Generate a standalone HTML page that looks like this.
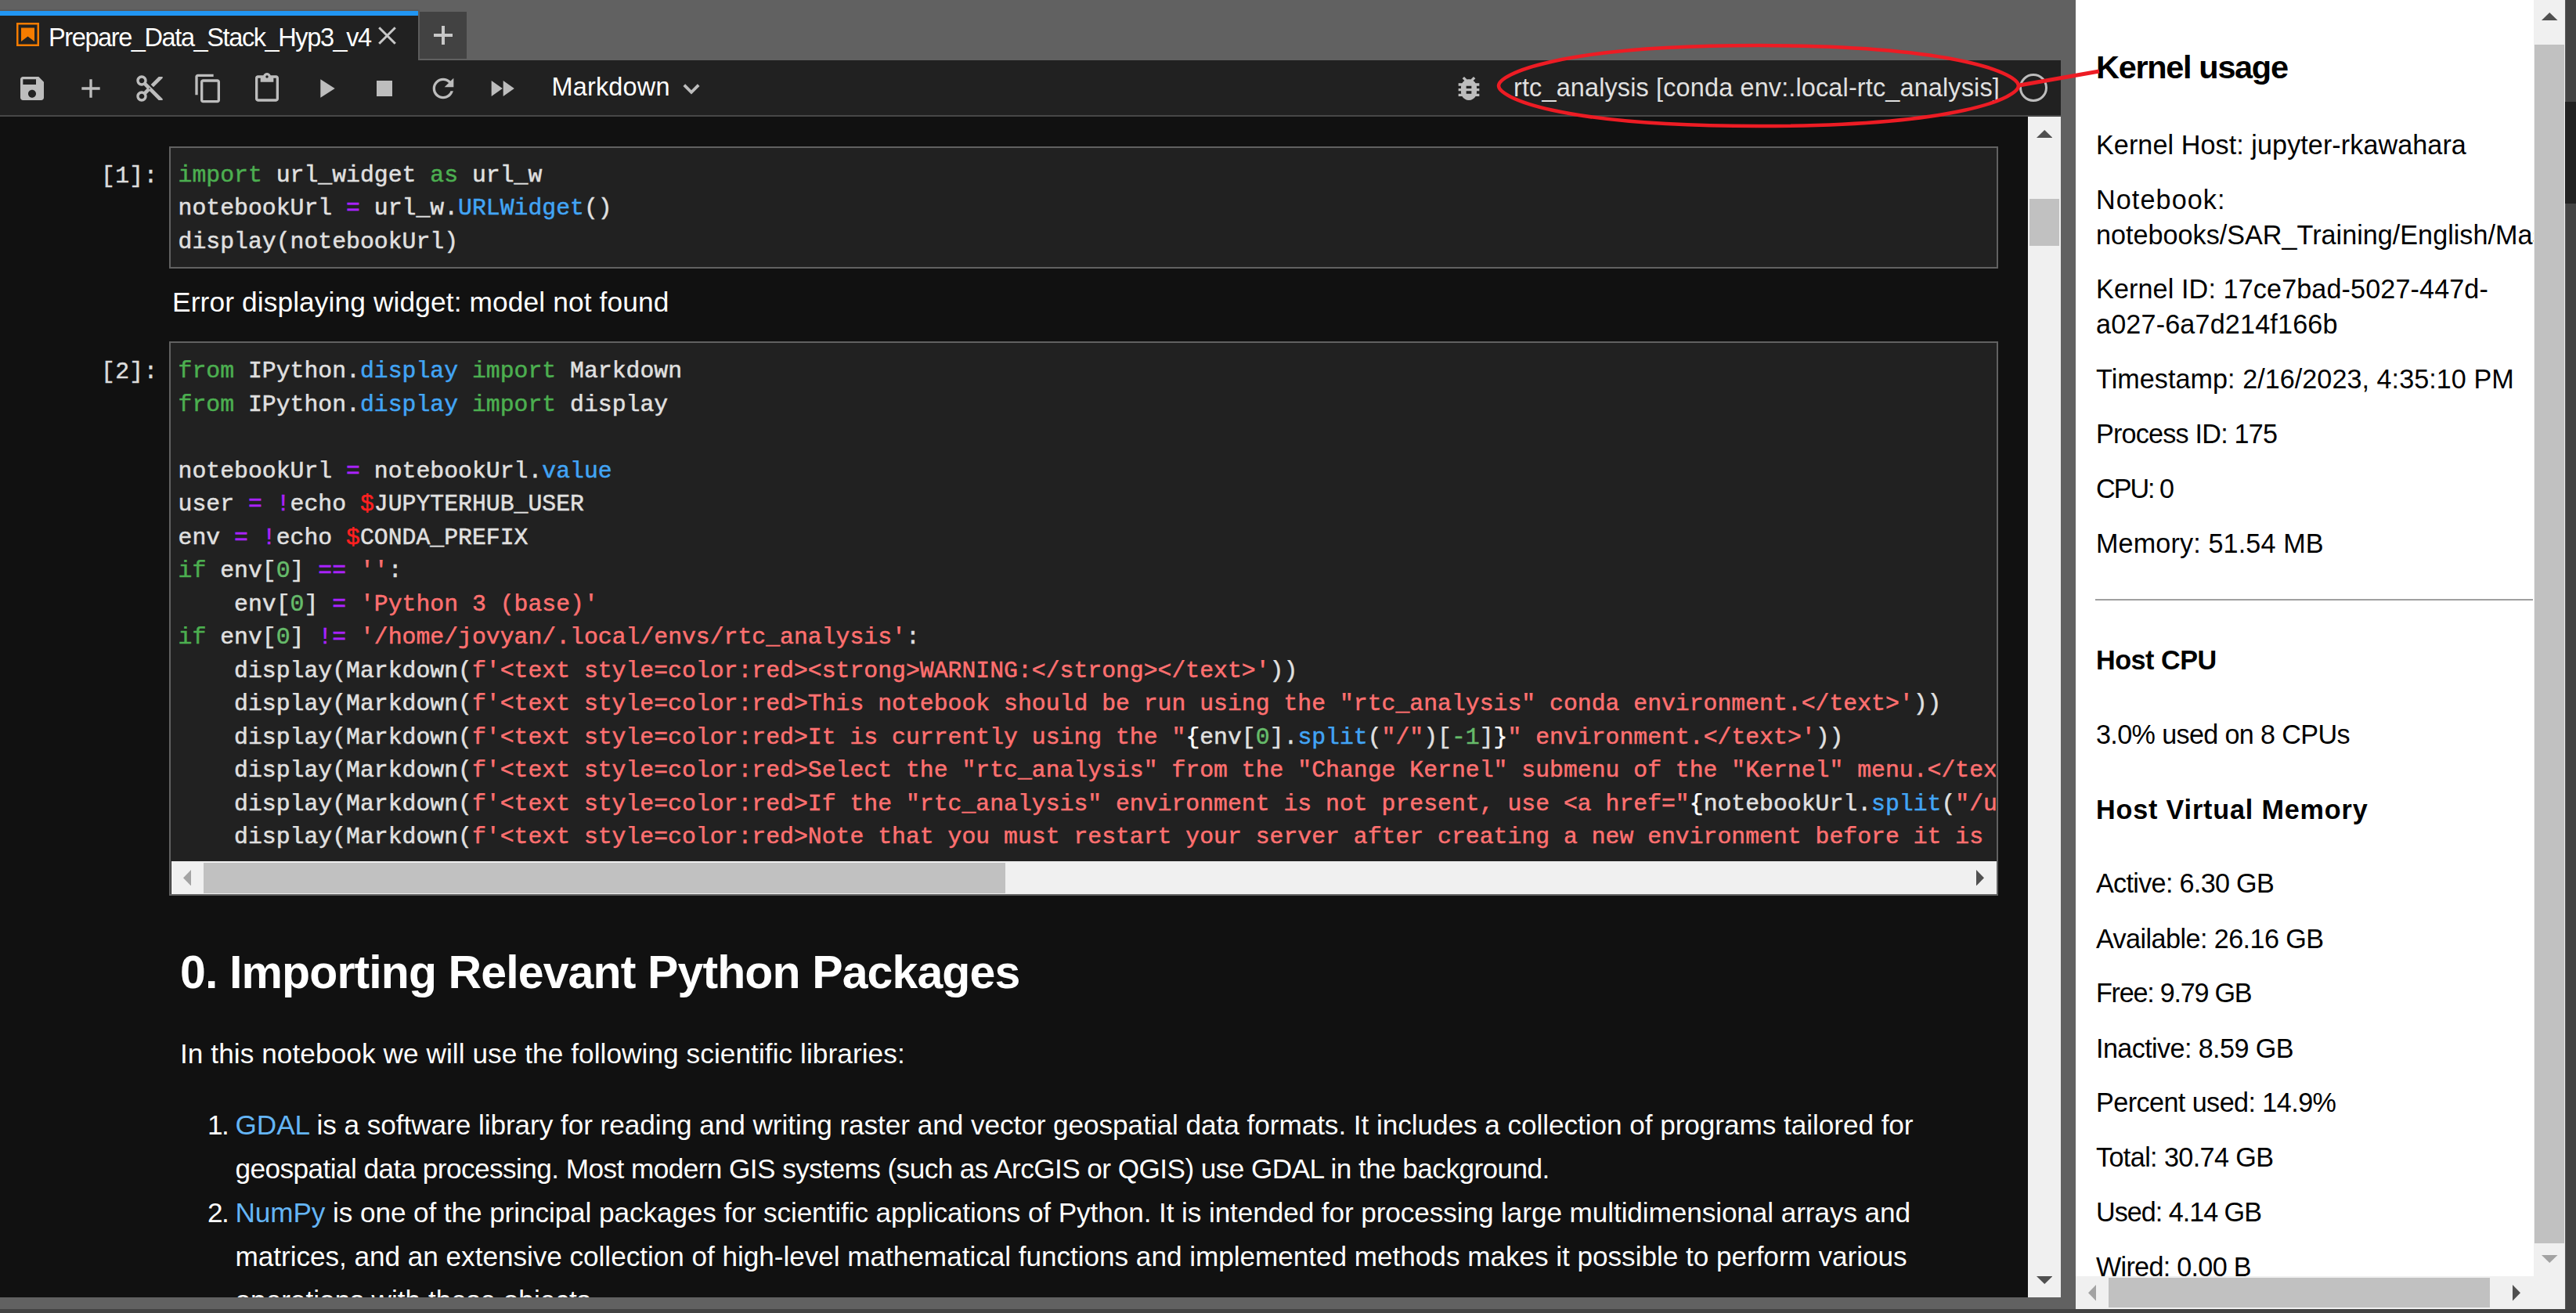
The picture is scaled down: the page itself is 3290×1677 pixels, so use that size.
<!DOCTYPE html><html><head><meta charset="utf-8"><style>html,body{margin:0;padding:0}body{width:3290px;height:1677px;overflow:hidden;position:relative;background:#616161}</style></head><body>
<div style="position:absolute;left:0px;top:12px;width:535px;height:2px;background:#5a5a5a;"></div>
<div style="position:absolute;left:0px;top:14px;width:534px;height:6px;background:#2196f3;"></div>
<div style="position:absolute;left:0px;top:20px;width:534px;height:57px;background:#212121;"></div>
<div style="position:absolute;left:534px;top:12px;width:2px;height:65px;background:#5c5c5c;"></div>
<div style="position:absolute;left:536px;top:15px;width:60px;height:60px;background:#424242;"></div>
<svg style="position:absolute;left:21px;top:29px" width="29" height="30" viewBox="0 0 29 30"><rect x="1.25" y="1.25" width="26.5" height="27.5" fill="none" stroke="#f57c00" stroke-width="2.5"/><path fill="#f57c00" d="M6 6.5h17v17.5l-8.5-6.5-8.5 6.5z"/></svg>
<div id="t0" style="position:absolute;left:62px;top:32.49px;font-family:'Liberation Sans', sans-serif;font-size:32.5px;line-height:32.5px;color:#ffffff;font-weight:normal;white-space:pre;letter-spacing:-1.394px;">Prepare_Data_Stack_Hyp3_v4</div>
<svg style="position:absolute;left:482px;top:33px" width="25" height="25" viewBox="0 0 25 25"><path d="M2.2 2.2L22.8 22.8M22.8 2.2L2.2 22.8" stroke="#c8c8c8" stroke-width="3"/></svg>
<div style="position:absolute;left:554px;top:43px;width:24px;height:4px;background:#c8c8c8;"></div>
<div style="position:absolute;left:564px;top:33px;width:4px;height:24px;background:#c8c8c8;"></div>
<div style="position:absolute;left:0px;top:77px;width:2632px;height:70px;background:#212121;"></div>
<div style="position:absolute;left:0px;top:147px;width:2632px;height:2px;background:#474747;"></div>
<div style="position:absolute;left:0px;top:149px;width:2590px;height:1px;background:#080808;"></div>
<svg style="position:absolute;left:20.8px;top:92.7px" width="40" height="40" viewBox="0 0 24 24"><path fill="#bdbdbd" d="M17 3H5c-1.11 0-2 .9-2 2v14c0 1.1.89 2 2 2h14c1.1 0 2-.9 2-2V7l-4-4zm-5 16c-1.66 0-3-1.34-3-3s1.34-3 3-3 3 1.34 3 3-1.34 3-3 3zm3-10H5V5h10v4z"/></svg>
<svg style="position:absolute;left:95.5px;top:92.7px" width="40" height="40" viewBox="0 0 24 24"><path fill="#bdbdbd" d="M19 13h-6v6h-2v-6H5v-2h6V5h2v6h6v2z"/></svg>
<svg style="position:absolute;left:170.7px;top:92.7px" width="40" height="40" viewBox="0 0 24 24"><path fill="#bdbdbd" d="M9.64 7.64c.23-.5.36-1.05.36-1.64 0-2.21-1.79-4-4-4S2 3.79 2 6s1.79 4 4 4c.59 0 1.14-.13 1.64-.36L10 12l-2.36 2.36C7.14 14.13 6.59 14 6 14c-2.21 0-4 1.79-4 4s1.79 4 4 4 4-1.79 4-4c0-.59-.13-1.14-.36-1.64L12 14l7 7h3v-1L9.64 7.64zM6 8c-1.1 0-2-.89-2-2s.9-2 2-2 2 .89 2 2-.9 2-2 2zm0 12c-1.1 0-2-.89-2-2s.9-2 2-2 2 .89 2 2-.9 2-2 2zm6-7.5c-.28 0-.5-.22-.5-.5s.22-.5.5-.5.5.22.5.5-.22.5-.5.5zM19 3l-6 6 2 2 7-7V3z"/></svg>
<svg style="position:absolute;left:246.2px;top:93.3px" width="40" height="40" viewBox="0 0 24 24"><path fill="#bdbdbd" d="M16 1H4c-1.1 0-2 .9-2 2v14h2V3h12V1zm3 4H8c-1.1 0-2 .9-2 2v14c0 1.1.9 2 2 2h11c1.1 0 2-.9 2-2V7c0-1.1-.9-2-2-2zm0 16H8V7h11v14z"/></svg>
<svg style="position:absolute;left:320.8px;top:93.1px" width="40" height="40" viewBox="0 0 24 24"><path fill="#bdbdbd" d="M19 2h-4.18C14.4.84 13.3 0 12 0c-1.3 0-2.4.84-2.82 2H5c-1.1 0-2 .9-2 2v16c0 1.1.9 2 2 2h14c1.1 0 2-.9 2-2V4c0-1.1-.9-2-2-2zm-7 0c.55 0 1 .45 1 1s-.45 1-1 1-1-.45-1-1 .45-1 1-1zm7 18H5V4h2v3h10V4h2v16z"/></svg>
<svg style="position:absolute;left:395.6px;top:92.7px" width="40" height="40" viewBox="0 0 24 24"><path fill="#bdbdbd" d="M8 5v14l11-7z"/></svg>
<svg style="position:absolute;left:470.8px;top:92.7px" width="40" height="40" viewBox="0 0 24 24"><path fill="#bdbdbd" d="M6 6h12v12H6z"/></svg>
<svg style="position:absolute;left:545.8px;top:92.7px" width="40" height="40" viewBox="0 0 24 24"><path fill="#bdbdbd" d="M17.65 6.35C16.2 4.9 14.21 4 12 4c-4.42 0-7.99 3.58-7.99 8s3.57 8 7.99 8c3.73 0 6.84-2.55 7.73-6h-2.08c-.82 2.33-3.04 4-5.65 4-3.31 0-6-2.69-6-6s2.69-6 6-6c1.66 0 3.14.69 4.22 1.78L13 11h7V4l-2.35 2.35z"/></svg>
<svg style="position:absolute;left:620.8px;top:93.2px" width="40" height="40" viewBox="0 0 24 24"><path fill="#bdbdbd" d="M4 18l8.5-6L4 6v12zm9-12v12l8.5-6L13 6z"/></svg>
<div id="t1" style="position:absolute;left:704.5px;top:95.49px;font-family:'Liberation Sans', sans-serif;font-size:32.5px;line-height:32.5px;color:#ffffff;font-weight:normal;white-space:pre;letter-spacing:0.15px;">Markdown</div>
<svg style="position:absolute;left:872px;top:106px" width="22" height="16" viewBox="0 0 22 16"><path d="M1.8 2.6L11 11.8L20.2 2.6" fill="none" stroke="#bdbdbd" stroke-width="3.8"/></svg>
<svg style="position:absolute;left:1855.9px;top:92.9px" width="40" height="40" viewBox="0 0 24 24"><path fill="#bdbdbd" d="M20 8h-2.81c-.45-.78-1.07-1.45-1.82-1.96L17 4.41 15.59 3l-2.17 2.17C12.96 5.06 12.49 5 12 5s-.96.06-1.41.17L8.41 3 7 4.41l1.62 1.63C7.88 6.55 7.26 7.22 6.81 8H4v2h2.09c-.05.33-.09.66-.09 1v1H4v2h2v1c0 .34.04.67.09 1H4v2h2.81c1.04 1.79 2.97 3 5.19 3s4.15-1.21 5.19-3H20v-2h-2.09c.05-.33.09-.66.09-1v-1h2v-2h-2v-1c0-.34-.04-.67-.09-1H20V8zm-6 8h-4v-2h4v2zm0-4h-4v-2h4v2z"/></svg>
<div style="position:absolute;left:1933px;top:96.27px;font-family:'Liberation Sans', sans-serif;font-size:32.4px;line-height:32.4px;color:#e0e0e0;font-weight:normal;white-space:pre;letter-spacing:0.16px;">rtc_analysis [conda env:.local-rtc_analysis]</div>
<svg style="position:absolute;left:2578px;top:93px" width="38" height="38" viewBox="0 0 38 38"><circle cx="19" cy="19" r="16.5" fill="none" stroke="#bdbdbd" stroke-width="3"/></svg>
<div style="position:absolute;left:0px;top:149px;width:2590px;height:1508px;background:#111111;"></div>
<div style="position:absolute;left:2590px;top:149px;width:42px;height:1508px;background:#f0f0f0;"></div>
<div style="position:absolute;left:2592px;top:254px;width:38px;height:60px;background:#c1c1c1;"></div>
<svg style="position:absolute;left:2600.5px;top:165.8px" width="20.5" height="10" viewBox="0 0 20.5 10"><path d="M0 10L10.25 0L20.5 10z" fill="#505050"/></svg>
<svg style="position:absolute;left:2600.5px;top:1630px" width="20.5" height="10" viewBox="0 0 20.5 10"><path d="M0 0L10.25 10L20.5 0z" fill="#505050"/></svg>
<div style="position:absolute;left:0px;top:1657px;width:2651px;height:15px;background:#616161;"></div>
<div style="position:absolute;left:0px;top:1672px;width:3290px;height:5px;background:#424242;"></div>
<div style="position:absolute;left:2632px;top:0px;width:19px;height:1672px;background:#616161;"></div>
<div style="position:absolute;left:216px;top:187px;width:2336px;height:156px;box-sizing:border-box;background:#212121;border:2px solid #616161"></div>
<div style="position:absolute;left:129px;top:210.77px;font-family:'Liberation Mono', monospace;font-size:29.79px;line-height:29.79px;white-space:pre;letter-spacing:0.3px;-webkit-text-stroke:0.5px;"><span style="color:#dcdcdc">[1]:</span></div>
<div style="position:absolute;left:227.6px;top:209.97px;font-family:'Liberation Mono', monospace;font-size:29.79px;line-height:29.79px;white-space:pre;letter-spacing:0.0px;-webkit-text-stroke:0.5px;"><span style="color:#4caf50">import</span><span style="color:#e0e0e0"> url_widget </span><span style="color:#4caf50">as</span><span style="color:#e0e0e0"> url_w</span></div>
<div style="position:absolute;left:227.6px;top:252.47px;font-family:'Liberation Mono', monospace;font-size:29.79px;line-height:29.79px;white-space:pre;letter-spacing:0.0px;-webkit-text-stroke:0.5px;"><span style="color:#e0e0e0">notebookUrl </span><span style="color:#aa22ff">=</span><span style="color:#e0e0e0"> url_w.</span><span style="color:#42a5f5">URLWidget</span><span style="color:#e0e0e0">()</span></div>
<div style="position:absolute;left:227.6px;top:294.97px;font-family:'Liberation Mono', monospace;font-size:29.79px;line-height:29.79px;white-space:pre;letter-spacing:0.0px;-webkit-text-stroke:0.5px;"><span style="color:#e0e0e0">display(notebookUrl)</span></div>
<div id="t2" style="position:absolute;left:220px;top:367.62px;font-family:'Liberation Sans', sans-serif;font-size:35.3px;line-height:35.3px;color:#ffffff;font-weight:normal;white-space:pre;letter-spacing:0.115px;">Error displaying widget: model not found</div>
<div style="position:absolute;left:216px;top:436px;width:2336px;height:708px;box-sizing:border-box;background:#212121;border:2px solid #616161"></div>
<div style="position:absolute;left:129px;top:461.17px;font-family:'Liberation Mono', monospace;font-size:29.79px;line-height:29.79px;white-space:pre;letter-spacing:0.3px;-webkit-text-stroke:0.5px;"><span style="color:#dcdcdc">[2]:</span></div>
<div style="position:absolute;left:227.6px;top:460.37px;font-family:'Liberation Mono', monospace;font-size:29.79px;line-height:29.79px;white-space:pre;letter-spacing:0.0px;-webkit-text-stroke:0.5px;width:2321.4px;overflow:hidden;"><span style="color:#4caf50">from</span><span style="color:#e0e0e0"> IPython.</span><span style="color:#42a5f5">display</span><span style="color:#e0e0e0"> </span><span style="color:#4caf50">import</span><span style="color:#e0e0e0"> Markdown</span></div>
<div style="position:absolute;left:227.6px;top:502.87px;font-family:'Liberation Mono', monospace;font-size:29.79px;line-height:29.79px;white-space:pre;letter-spacing:0.0px;-webkit-text-stroke:0.5px;width:2321.4px;overflow:hidden;"><span style="color:#4caf50">from</span><span style="color:#e0e0e0"> IPython.</span><span style="color:#42a5f5">display</span><span style="color:#e0e0e0"> </span><span style="color:#4caf50">import</span><span style="color:#e0e0e0"> display</span></div>
<div style="position:absolute;left:227.6px;top:587.87px;font-family:'Liberation Mono', monospace;font-size:29.79px;line-height:29.79px;white-space:pre;letter-spacing:0.0px;-webkit-text-stroke:0.5px;width:2321.4px;overflow:hidden;"><span style="color:#e0e0e0">notebookUrl </span><span style="color:#aa22ff">=</span><span style="color:#e0e0e0"> notebookUrl.</span><span style="color:#42a5f5">value</span></div>
<div style="position:absolute;left:227.6px;top:630.37px;font-family:'Liberation Mono', monospace;font-size:29.79px;line-height:29.79px;white-space:pre;letter-spacing:0.0px;-webkit-text-stroke:0.5px;width:2321.4px;overflow:hidden;"><span style="color:#e0e0e0">user </span><span style="color:#aa22ff">=</span><span style="color:#e0e0e0"> </span><span style="color:#aa22ff">!</span><span style="color:#e0e0e0">echo </span><span style="color:#ff2020">$</span><span style="color:#e0e0e0">JUPYTERHUB_USER</span></div>
<div style="position:absolute;left:227.6px;top:672.87px;font-family:'Liberation Mono', monospace;font-size:29.79px;line-height:29.79px;white-space:pre;letter-spacing:0.0px;-webkit-text-stroke:0.5px;width:2321.4px;overflow:hidden;"><span style="color:#e0e0e0">env </span><span style="color:#aa22ff">=</span><span style="color:#e0e0e0"> </span><span style="color:#aa22ff">!</span><span style="color:#e0e0e0">echo </span><span style="color:#ff2020">$</span><span style="color:#e0e0e0">CONDA_PREFIX</span></div>
<div style="position:absolute;left:227.6px;top:715.37px;font-family:'Liberation Mono', monospace;font-size:29.79px;line-height:29.79px;white-space:pre;letter-spacing:0.0px;-webkit-text-stroke:0.5px;width:2321.4px;overflow:hidden;"><span style="color:#4caf50">if</span><span style="color:#e0e0e0"> env[</span><span style="color:#66bb6a">0</span><span style="color:#e0e0e0">] </span><span style="color:#aa22ff">==</span><span style="color:#e0e0e0"> </span><span style="color:#ff7070">&#x27;&#x27;</span><span style="color:#e0e0e0">:</span></div>
<div style="position:absolute;left:227.6px;top:757.87px;font-family:'Liberation Mono', monospace;font-size:29.79px;line-height:29.79px;white-space:pre;letter-spacing:0.0px;-webkit-text-stroke:0.5px;width:2321.4px;overflow:hidden;"><span style="color:#e0e0e0">    env[</span><span style="color:#66bb6a">0</span><span style="color:#e0e0e0">] </span><span style="color:#aa22ff">=</span><span style="color:#e0e0e0"> </span><span style="color:#ff7070">&#x27;Python 3 (base)&#x27;</span></div>
<div style="position:absolute;left:227.6px;top:800.37px;font-family:'Liberation Mono', monospace;font-size:29.79px;line-height:29.79px;white-space:pre;letter-spacing:0.0px;-webkit-text-stroke:0.5px;width:2321.4px;overflow:hidden;"><span style="color:#4caf50">if</span><span style="color:#e0e0e0"> env[</span><span style="color:#66bb6a">0</span><span style="color:#e0e0e0">] </span><span style="color:#aa22ff">!=</span><span style="color:#e0e0e0"> </span><span style="color:#ff7070">&#x27;/home/jovyan/.local/envs/rtc_analysis&#x27;</span><span style="color:#e0e0e0">:</span></div>
<div style="position:absolute;left:227.6px;top:842.87px;font-family:'Liberation Mono', monospace;font-size:29.79px;line-height:29.79px;white-space:pre;letter-spacing:0.0px;-webkit-text-stroke:0.5px;width:2321.4px;overflow:hidden;"><span style="color:#e0e0e0">    display(Markdown(</span><span style="color:#ff7070">f&#x27;&lt;text style=color:red&gt;&lt;strong&gt;WARNING:&lt;/strong&gt;&lt;/text&gt;&#x27;</span><span style="color:#e0e0e0">))</span></div>
<div style="position:absolute;left:227.6px;top:885.37px;font-family:'Liberation Mono', monospace;font-size:29.79px;line-height:29.79px;white-space:pre;letter-spacing:0.0px;-webkit-text-stroke:0.5px;width:2321.4px;overflow:hidden;"><span style="color:#e0e0e0">    display(Markdown(</span><span style="color:#ff7070">f&#x27;&lt;text style=color:red&gt;This notebook should be run using the &quot;rtc_analysis&quot; conda environment.&lt;/text&gt;&#x27;</span><span style="color:#e0e0e0">))</span></div>
<div style="position:absolute;left:227.6px;top:927.87px;font-family:'Liberation Mono', monospace;font-size:29.79px;line-height:29.79px;white-space:pre;letter-spacing:0.0px;-webkit-text-stroke:0.5px;width:2321.4px;overflow:hidden;"><span style="color:#e0e0e0">    display(Markdown(</span><span style="color:#ff7070">f&#x27;&lt;text style=color:red&gt;It is currently using the &quot;</span><span style="color:#ffffff">{</span><span style="color:#e0e0e0">env[</span><span style="color:#66bb6a">0</span><span style="color:#e0e0e0">]</span><span style="color:#e0e0e0">.</span><span style="color:#42a5f5">split</span><span style="color:#e0e0e0">(</span><span style="color:#ff7070">&quot;/&quot;</span><span style="color:#e0e0e0">)[</span><span style="color:#66bb6a">-1</span><span style="color:#e0e0e0">]</span><span style="color:#ffffff">}</span><span style="color:#ff7070">&quot; environment.&lt;/text&gt;&#x27;</span><span style="color:#e0e0e0">))</span></div>
<div style="position:absolute;left:227.6px;top:970.37px;font-family:'Liberation Mono', monospace;font-size:29.79px;line-height:29.79px;white-space:pre;letter-spacing:0.0px;-webkit-text-stroke:0.5px;width:2321.4px;overflow:hidden;"><span style="color:#e0e0e0">    display(Markdown(</span><span style="color:#ff7070">f&#x27;&lt;text style=color:red&gt;Select the &quot;rtc_analysis&quot; from the &quot;Change Kernel&quot; submenu of the &quot;Kernel&quot; menu.&lt;/text&gt;&#x27;))</span></div>
<div style="position:absolute;left:227.6px;top:1012.87px;font-family:'Liberation Mono', monospace;font-size:29.79px;line-height:29.79px;white-space:pre;letter-spacing:0.0px;-webkit-text-stroke:0.5px;width:2321.4px;overflow:hidden;"><span style="color:#e0e0e0">    display(Markdown(</span><span style="color:#ff7070">f&#x27;&lt;text style=color:red&gt;If the &quot;rtc_analysis&quot; environment is not present, use &lt;a href=&quot;</span><span style="color:#ffffff">{</span><span style="color:#e0e0e0">notebookUrl.</span><span style="color:#42a5f5">split</span><span style="color:#e0e0e0">(</span><span style="color:#ff7070">&quot;/user/&quot;</span><span style="color:#e0e0e0">)[0]}/lab/tree/notebooks</span></div>
<div style="position:absolute;left:227.6px;top:1055.37px;font-family:'Liberation Mono', monospace;font-size:29.79px;line-height:29.79px;white-space:pre;letter-spacing:0.0px;-webkit-text-stroke:0.5px;width:2321.4px;overflow:hidden;"><span style="color:#e0e0e0">    display(Markdown(</span><span style="color:#ff7070">f&#x27;&lt;text style=color:red&gt;Note that you must restart your server after creating a new environment before it is usable.&lt;/text&gt;&#x27;))</span></div>
<div style="position:absolute;left:218.5px;top:1099.5px;width:2331px;height:42px;background:#f0f0f0;"></div>
<div style="position:absolute;left:259.5px;top:1102px;width:1024px;height:38.5px;background:#c1c1c1;"></div>
<svg style="position:absolute;left:234px;top:1110.5px" width="10" height="20.5" viewBox="0 0 10 20.5"><path d="M10 0L0 10.25L10 20.5z" fill="#a3a3a3"/></svg>
<svg style="position:absolute;left:2524px;top:1110.5px" width="10" height="20.5" viewBox="0 0 10 20.5"><path d="M0 0L10 10.25L0 20.5z" fill="#505050"/></svg>
<div id="t3" style="position:absolute;left:230px;top:1213.06px;font-family:'Liberation Sans', sans-serif;font-size:59px;line-height:59px;color:#ffffff;font-weight:bold;white-space:pre;letter-spacing:-0.879px;">0. Importing Relevant Python Packages</div>
<div id="t4" style="position:absolute;left:230px;top:1328.20px;font-family:'Liberation Sans', sans-serif;font-size:35.2px;line-height:35.2px;color:#ffffff;font-weight:normal;white-space:pre;letter-spacing:0.071px;">In this notebook we will use the following scientific libraries:</div>
<div style="position:absolute;left:265px;top:1418.60px;font-family:'Liberation Sans', sans-serif;font-size:35.2px;line-height:35.2px;color:#ffffff;font-weight:normal;white-space:pre;letter-spacing:-1.5px;">1.</div>
<div id="t5" style="position:absolute;left:300.5px;top:1418.60px;font-family:'Liberation Sans', sans-serif;font-size:35.2px;line-height:35.2px;color:#ffffff;font-weight:normal;white-space:pre;letter-spacing:-0.063px;"><span style="color:#64b5f6">GDAL</span> is a software library for reading and writing raster and vector geospatial data formats. It includes a collection of programs tailored for</div>
<div id="t6" style="position:absolute;left:300.5px;top:1474.60px;font-family:'Liberation Sans', sans-serif;font-size:35.2px;line-height:35.2px;color:#ffffff;font-weight:normal;white-space:pre;letter-spacing:-0.568px;">geospatial data processing. Most modern GIS systems (such as ArcGIS or QGIS) use GDAL in the background.</div>
<div style="position:absolute;left:265px;top:1530.60px;font-family:'Liberation Sans', sans-serif;font-size:35.2px;line-height:35.2px;color:#ffffff;font-weight:normal;white-space:pre;letter-spacing:-1.5px;">2.</div>
<div id="t7" style="position:absolute;left:300.5px;top:1530.60px;font-family:'Liberation Sans', sans-serif;font-size:35.2px;line-height:35.2px;color:#ffffff;font-weight:normal;white-space:pre;letter-spacing:-0.099px;"><span style="color:#64b5f6">NumPy</span> is one of the principal packages for scientific applications of Python. It is intended for processing large multidimensional arrays and</div>
<div id="t8" style="position:absolute;left:300.5px;top:1586.60px;font-family:'Liberation Sans', sans-serif;font-size:35.2px;line-height:35.2px;color:#ffffff;font-weight:normal;white-space:pre;letter-spacing:-0.048px;">matrices, and an extensive collection of high-level mathematical functions and implemented methods makes it possible to perform various</div>
<div style="position:absolute;left:300.5px;top:1642.60px;font-family:'Liberation Sans', sans-serif;font-size:35.2px;line-height:35.2px;color:#ffffff;font-weight:normal;white-space:pre;letter-spacing:0px;">operations with these objects.</div>
<div style="position:absolute;left:0px;top:1657px;width:2651px;height:15px;background:#616161;"></div>
<div style="position:absolute;left:0px;top:1672px;width:3290px;height:5px;background:#424242;"></div>
<div style="position:absolute;left:2651px;top:0;width:585px;height:1630px;background:#ffffff;overflow:hidden">
<div id="t9" style="position:absolute;left:26px;top:65.47px;font-family:'Liberation Sans', sans-serif;font-size:41.5px;line-height:41.5px;color:#000;font-weight:bold;white-space:pre;letter-spacing:-1.333px;">Kernel usage</div>
<div id="t10" style="position:absolute;left:26px;top:167.55px;font-family:'Liberation Sans', sans-serif;font-size:34.2px;line-height:34.2px;color:#000;font-weight:normal;white-space:pre;letter-spacing:0.057px;">Kernel Host: jupyter-rkawahara</div>
<div id="t11" style="position:absolute;left:26px;top:237.65px;font-family:'Liberation Sans', sans-serif;font-size:34.2px;line-height:34.2px;color:#000;font-weight:normal;white-space:pre;letter-spacing:1.084px;">Notebook:</div>
<div style="position:absolute;left:26px;top:282.95px;font-family:'Liberation Sans', sans-serif;font-size:34.2px;line-height:34.2px;color:#000;font-weight:normal;white-space:pre;letter-spacing:0px;">notebooks/SAR_Training/English/Master/Prepare_Data_Stack_Hyp3_v4.ipynb</div>
<div id="t12" style="position:absolute;left:26px;top:352.05px;font-family:'Liberation Sans', sans-serif;font-size:34.2px;line-height:34.2px;color:#000;font-weight:normal;white-space:pre;letter-spacing:0.1px;">Kernel ID: 17ce7bad-5027-447d-</div>
<div id="t13" style="position:absolute;left:26px;top:397.05px;font-family:'Liberation Sans', sans-serif;font-size:34.2px;line-height:34.2px;color:#000;font-weight:normal;white-space:pre;letter-spacing:0.149px;">a027-6a7d214f166b</div>
<div id="t14" style="position:absolute;left:26px;top:467.35px;font-family:'Liberation Sans', sans-serif;font-size:34.2px;line-height:34.2px;color:#000;font-weight:normal;white-space:pre;letter-spacing:0.031px;">Timestamp: 2/16/2023, 4:35:10 PM</div>
<div id="t15" style="position:absolute;left:26px;top:536.75px;font-family:'Liberation Sans', sans-serif;font-size:34.2px;line-height:34.2px;color:#000;font-weight:normal;white-space:pre;letter-spacing:-0.8px;">Process ID: 175</div>
<div id="t16" style="position:absolute;left:26px;top:607.05px;font-family:'Liberation Sans', sans-serif;font-size:34.2px;line-height:34.2px;color:#000;font-weight:normal;white-space:pre;letter-spacing:-2.047px;">CPU: 0</div>
<div id="t17" style="position:absolute;left:26px;top:676.55px;font-family:'Liberation Sans', sans-serif;font-size:34.2px;line-height:34.2px;color:#000;font-weight:normal;white-space:pre;letter-spacing:0.12px;">Memory: 51.54 MB</div>
<div id="t18" style="position:absolute;left:26px;top:921.05px;font-family:'Liberation Sans', sans-serif;font-size:34.2px;line-height:34.2px;color:#000;font-weight:normal;white-space:pre;letter-spacing:-0.659px;">3.0% used on 8 CPUs</div>
<div id="t19" style="position:absolute;left:26px;top:1111.05px;font-family:'Liberation Sans', sans-serif;font-size:34.2px;line-height:34.2px;color:#000;font-weight:normal;white-space:pre;letter-spacing:-0.697px;">Active: 6.30 GB</div>
<div id="t20" style="position:absolute;left:26px;top:1181.55px;font-family:'Liberation Sans', sans-serif;font-size:34.2px;line-height:34.2px;color:#000;font-weight:normal;white-space:pre;letter-spacing:-0.579px;">Available: 26.16 GB</div>
<div id="t21" style="position:absolute;left:26px;top:1251.05px;font-family:'Liberation Sans', sans-serif;font-size:34.2px;line-height:34.2px;color:#000;font-weight:normal;white-space:pre;letter-spacing:-1.268px;">Free: 9.79 GB</div>
<div id="t22" style="position:absolute;left:26px;top:1321.55px;font-family:'Liberation Sans', sans-serif;font-size:34.2px;line-height:34.2px;color:#000;font-weight:normal;white-space:pre;letter-spacing:-0.612px;">Inactive: 8.59 GB</div>
<div id="t23" style="position:absolute;left:26px;top:1391.05px;font-family:'Liberation Sans', sans-serif;font-size:34.2px;line-height:34.2px;color:#000;font-weight:normal;white-space:pre;letter-spacing:-0.579px;">Percent used: 14.9%</div>
<div id="t24" style="position:absolute;left:26px;top:1461.05px;font-family:'Liberation Sans', sans-serif;font-size:34.2px;line-height:34.2px;color:#000;font-weight:normal;white-space:pre;letter-spacing:-0.619px;">Total: 30.74 GB</div>
<div id="t25" style="position:absolute;left:26px;top:1531.05px;font-family:'Liberation Sans', sans-serif;font-size:34.2px;line-height:34.2px;color:#000;font-weight:normal;white-space:pre;letter-spacing:-1.021px;">Used: 4.14 GB</div>
<div id="t26" style="position:absolute;left:26px;top:1601.05px;font-family:'Liberation Sans', sans-serif;font-size:34.2px;line-height:34.2px;color:#000;font-weight:normal;white-space:pre;letter-spacing:-0.713px;">Wired: 0.00 B</div>
<div id="t27" style="position:absolute;left:26px;top:826.05px;font-family:'Liberation Sans', sans-serif;font-size:34.2px;line-height:34.2px;color:#000;font-weight:bold;white-space:pre;letter-spacing:-0.5px;">Host CPU</div>
<div id="t28" style="position:absolute;left:26px;top:1016.85px;font-family:'Liberation Sans', sans-serif;font-size:34.2px;line-height:34.2px;color:#000;font-weight:bold;white-space:pre;letter-spacing:0.826px;">Host Virtual Memory</div>
<div style="position:absolute;left:25px;top:765px;width:559px;height:2px;background:#a0a0a0"></div>
</div>
<div style="position:absolute;left:3236px;top:0px;width:40px;height:1630px;background:#f0f0f0;"></div>
<div style="position:absolute;left:3237px;top:57px;width:38px;height:1531px;background:#c1c1c1;"></div>
<svg style="position:absolute;left:3246px;top:16px" width="20.5" height="10" viewBox="0 0 20.5 10"><path d="M0 10L10.25 0L20.5 10z" fill="#505050"/></svg>
<svg style="position:absolute;left:3246px;top:1603px" width="20.5" height="10" viewBox="0 0 20.5 10"><path d="M0 0L10.25 10L20.5 0z" fill="#a3a3a3"/></svg>
<div style="position:absolute;left:2651px;top:1630px;width:625px;height:42px;background:#f0f0f0;"></div>
<div style="position:absolute;left:2693px;top:1632px;width:487px;height:38px;background:#c1c1c1;"></div>
<svg style="position:absolute;left:2667px;top:1641px" width="10" height="20.5" viewBox="0 0 10 20.5"><path d="M10 0L0 10.25L10 20.5z" fill="#a3a3a3"/></svg>
<svg style="position:absolute;left:3209px;top:1641px" width="10" height="20.5" viewBox="0 0 10 20.5"><path d="M0 0L10 10.25L0 20.5z" fill="#505050"/></svg>
<div style="position:absolute;left:3276px;top:0px;width:14px;height:1672px;background:#444444;"></div>
<div style="position:absolute;left:3276px;top:0px;width:1px;height:1672px;background:#5a5a5a;"></div>
<div style="position:absolute;left:3276px;top:130px;width:14px;height:130px;background:#222222;"></div>
<svg style="position:absolute;left:0;top:0" width="3290" height="1677" viewBox="0 0 3290 1677"><path d="M1914 109.6 C1914 95.18 1987.04 58.099999999999994 2246 58.099999999999994 C2504.96 58.099999999999994 2578 95.18 2578 109.6 C2578 124.02 2504.96 161.1 2246 161.1 C1987.04 161.1 1914 124.02 1914 109.6Z" fill="none" stroke="#ed1c24" stroke-width="4.5"/><line x1="2576" y1="109.5" x2="2681" y2="91" stroke="#ed1c24" stroke-width="5"/></svg>
</body></html>
